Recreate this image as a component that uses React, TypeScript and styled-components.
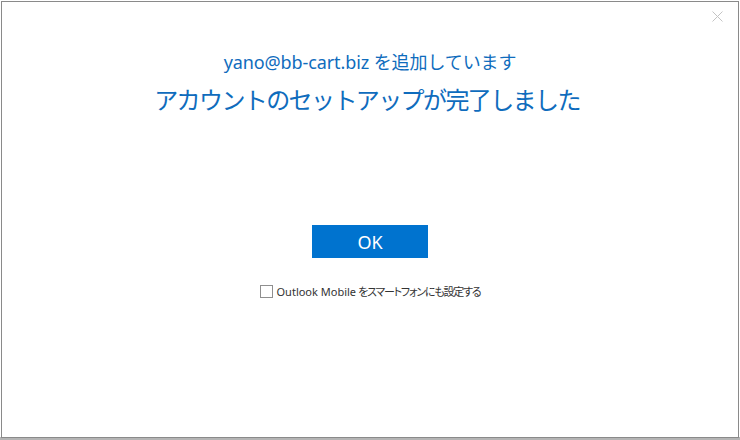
import styled, { createGlobalStyle } from "styled-components";

const GlobalStyle = createGlobalStyle`
  html, body {
    margin: 0;
    padding: 0;
    background: #ffffff;
    font-family: "Noto Sans", "Noto Sans CJK JP", sans-serif;
  }
`;

export default function App() {
  return (
    <>
      <GlobalStyle />
      <Screen>
        <Dialog>
          <CloseButton aria-label="閉じる">
            <svg width="11" height="11" viewBox="0 0 11 11">
              <path d="M0.5 0.5 L10.5 10.5 M10.5 0.5 L0.5 10.5" stroke="#c4c4c4" strokeWidth="1" />
            </svg>
          </CloseButton>
          <Heading>
            <Subtitle>yano@bb-cart.biz を追加しています</Subtitle>
            <Title>アカウントのセットアップが完了しました</Title>
          </Heading>
          <Actions>
            <OkButton>OK</OkButton>
            <CheckRow>
              <Box />
              <Latin>Outlook Mobile</Latin>
              <Kana>をスマートフォンにも設定する</Kana>
            </CheckRow>
          </Actions>
        </Dialog>
      </Screen>
    </>
  );
}

const Screen = styled.div`
  width: 740px;
  height: 440px;
  padding: 1px 0 0 1px;
  box-sizing: border-box;
  background: linear-gradient(to bottom, #ffffff 437px, #b4b4b4 437px);
`;

const Dialog = styled.div`
  position: relative;
  width: 738px;
  height: 437px;
  box-sizing: border-box;
  border: 1px solid #8a8a8a;
  background: #ffffff;
  display: flex;
  flex-direction: column;
  align-items: center;
`;

const CloseButton = styled.div`
  position: absolute;
  top: 9px;
  right: 15px;
  width: 11px;
  height: 11px;
  display: flex;
`;

const Heading = styled.div`
  margin-top: 47px;
  display: flex;
  flex-direction: column;
  align-items: center;
  color: #0f6cbd;
`;

const Subtitle = styled.div`
  font-size: 18px;
  line-height: 26px;
  letter-spacing: -0.1px;
  font-family: "Noto Sans", "Noto Sans CJK JP", sans-serif;
`;

const Title = styled.div`
  margin-top: 7px;
  margin-right: 6px;
  font-size: 24px;
  line-height: 34px;
  letter-spacing: -1.6px;
  font-family: "Noto Sans CJK JP", sans-serif;
`;

const Actions = styled.div`
  margin-top: 109px;
  display: flex;
  flex-direction: column;
  align-items: center;
`;

const OkButton = styled.button`
  width: 116px;
  height: 33px;
  border: none;
  background: #0073cf;
  color: #ffffff;
  font-family: "Noto Sans", sans-serif;
  font-size: 18px;
  padding: 0;
`;

const CheckRow = styled.label`
  margin-top: 25px;
  display: flex;
  align-items: center;
  gap: 4px;
  color: #333333;
`;

const Latin = styled.span`
  font-family: "Noto Sans", sans-serif;
  font-size: 11px;
  letter-spacing: 0;
`;

const Kana = styled.span`
  margin-left: -2px;
  font-family: "Noto Sans CJK JP", sans-serif;
  font-size: 11px;
  font-feature-settings: "palt";
  letter-spacing: -1.2px;
`;

const Box = styled.span`
  width: 11px;
  height: 11px;
  border: 1px solid #8f8f8f;
  background: #ffffff;
`;
